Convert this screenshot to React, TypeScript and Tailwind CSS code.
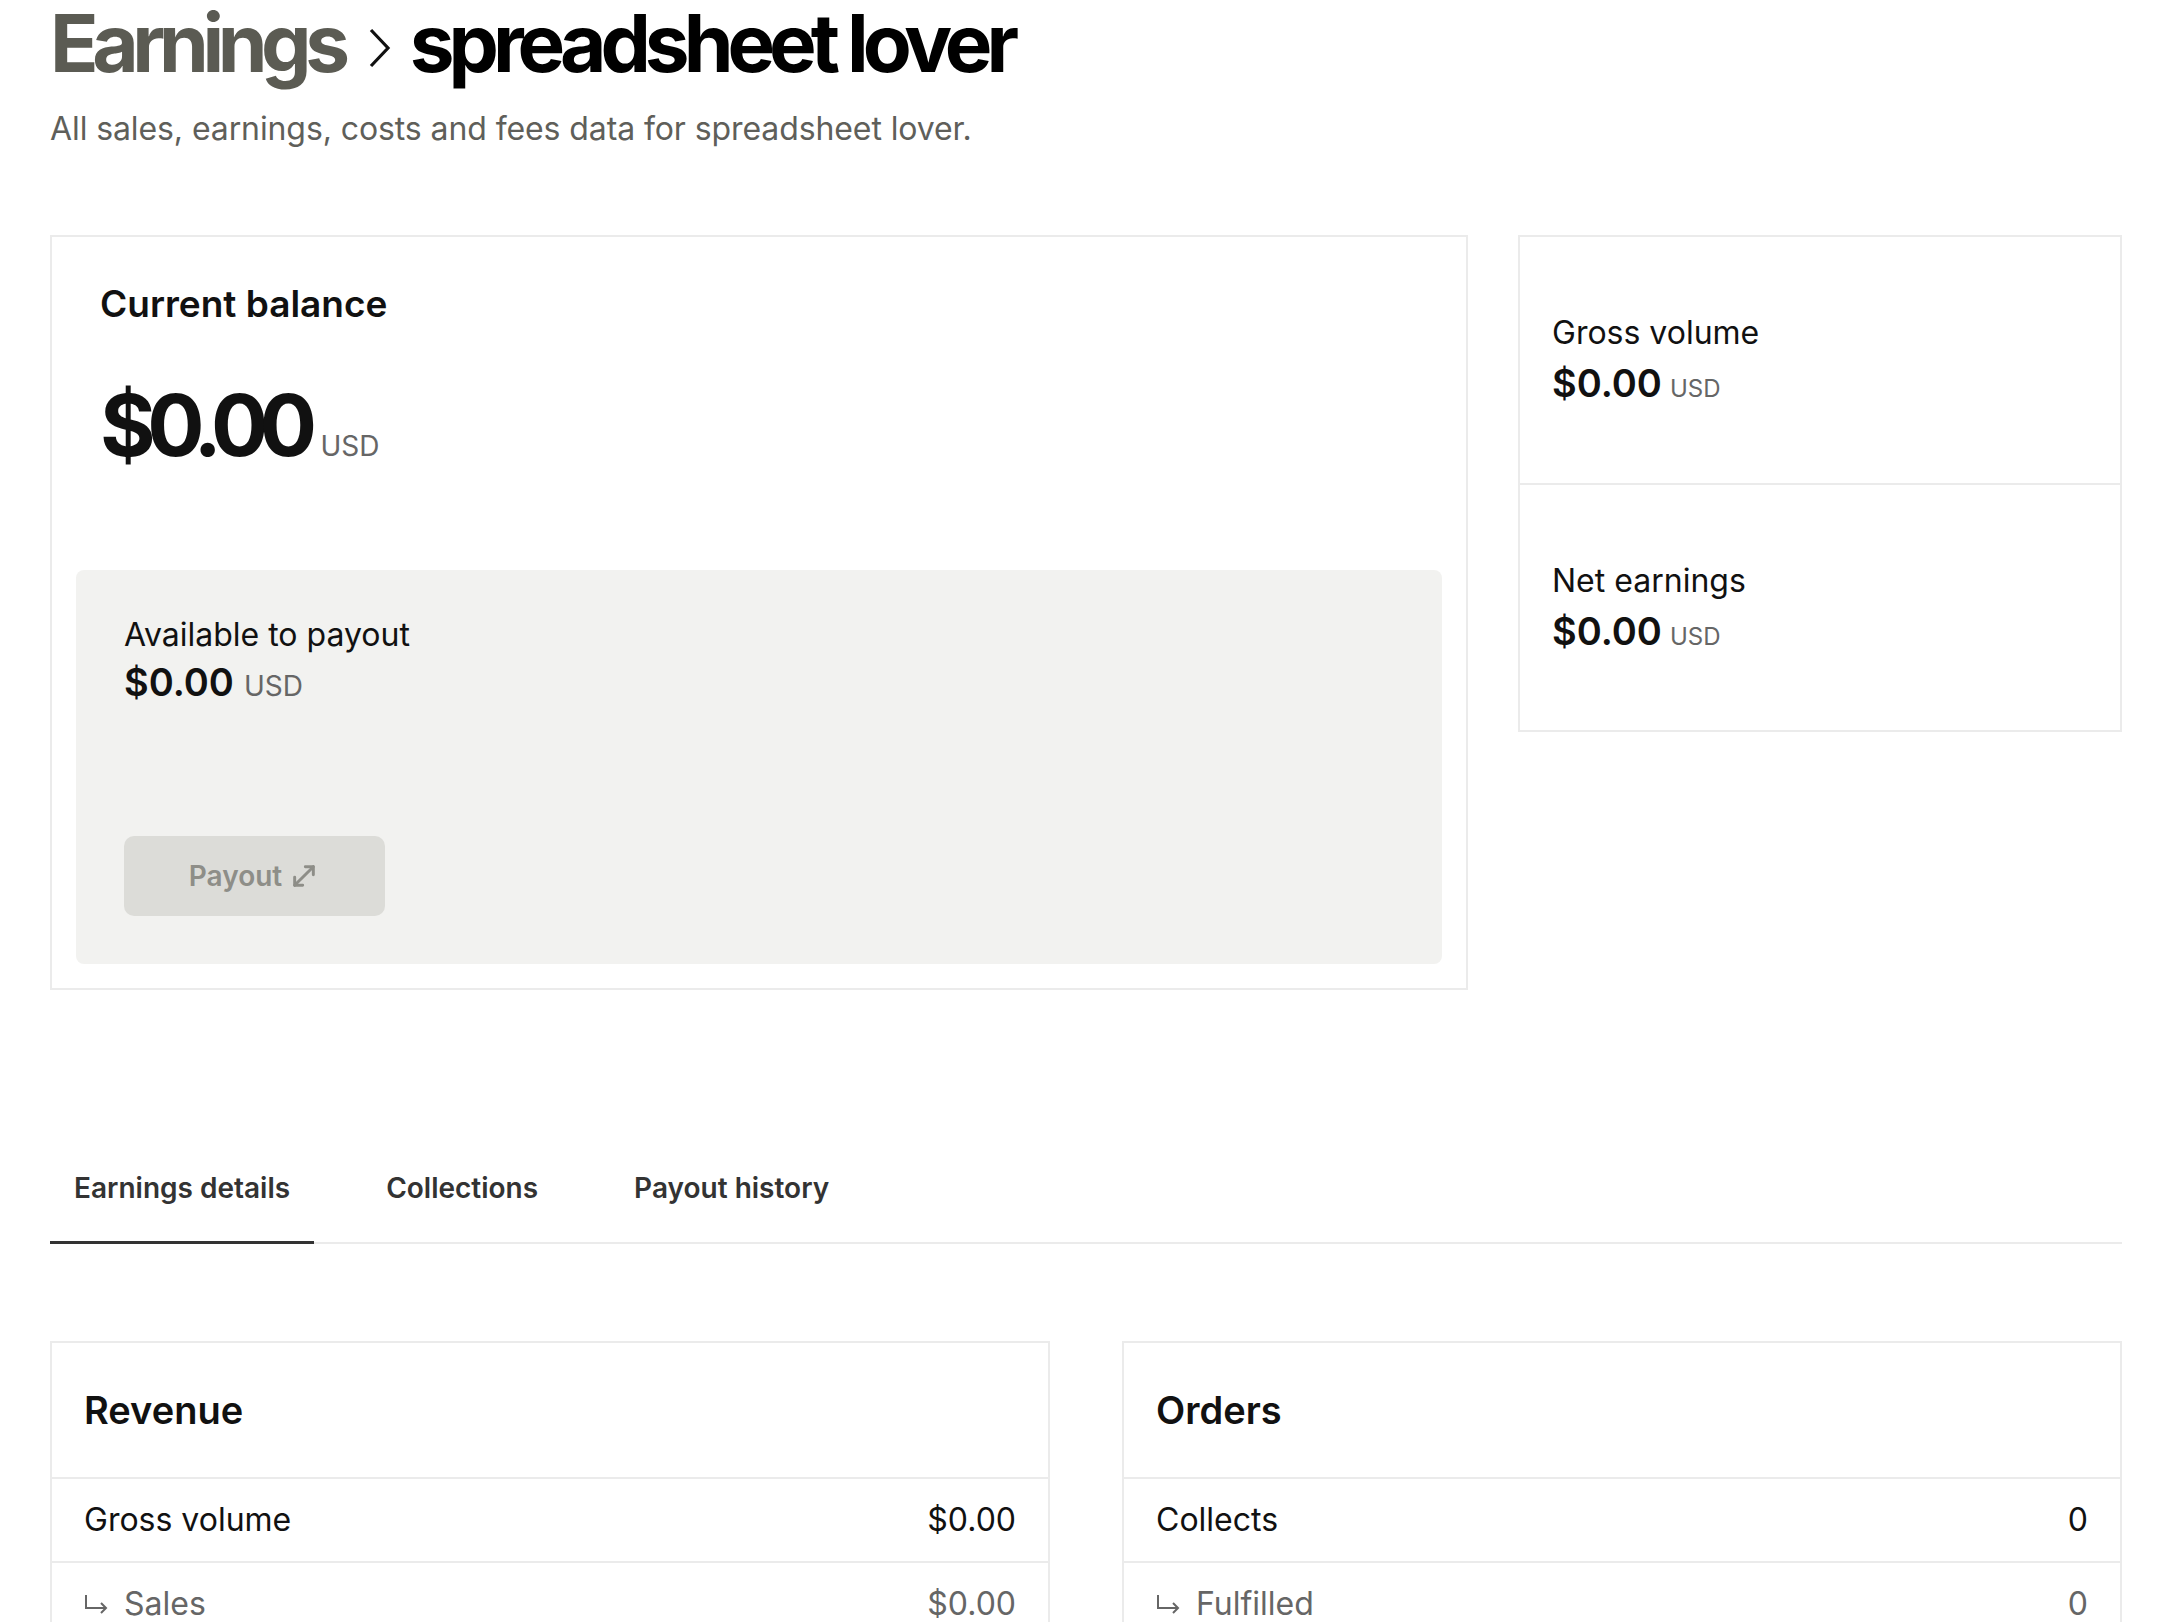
import React from 'react'
import { MoveDiagonal } from 'lucide-react'

function SubArrow() {
  return (
    <svg width="26" height="20" viewBox="0 0 26 20" fill="none" stroke="currentColor" strokeWidth="2" className="shrink-0">
      <path d="M2 1v13h20" />
      <path d="M17 9l5 5-5 5" />
    </svg>
  )
}

function Amount() {
  return (
    <div className="flex items-baseline gap-2">
      <span className="text-[38px] font-semibold leading-[44px]">$0.00</span>
      <span className="text-[24px] text-[#666]">USD</span>
    </div>
  )
}

function Row({ label, value, sub }: { label: string; value: string; sub?: boolean }) {
  return (
    <div className={`h-[84px] flex items-center justify-between px-8 border-b-2 border-[#ebebeb] text-[32px] ${sub ? 'text-[#666]' : 'text-[#111]'}`}>
      <div className="flex items-center gap-[14px]">
        {sub && <SubArrow />}
        <span>{label}</span>
      </div>
      <span>{value}</span>
    </div>
  )
}

function TableCard({ title, rows }: { title: string; rows: { label: string; value: string; sub?: boolean }[] }) {
  return (
    <div className="border-2 border-[#ebebeb]">
      <div className="h-[136px] flex items-center px-8 border-b-2 border-[#ebebeb]">
        <h3 className="text-[38px] font-semibold text-[#111]">{title}</h3>
      </div>
      {rows.map((r) => (
        <Row key={r.label} {...r} />
      ))}
    </div>
  )
}

export default function App() {
  const tabs = ['Earnings details', 'Collections', 'Payout history']

  return (
    <div className="min-h-screen bg-white font-['Inter',sans-serif] text-[#111] pl-[50px] pr-[46px] pt-[3px]">

      {/* ── Header ── */}
      <div className="flex items-start">
        <h1 className="text-[80px] font-bold leading-none tracking-[-0.08em] text-[#5b5b53]">Earnings</h1>
        <svg width="23" height="40" viewBox="0 0 23 40" fill="none" stroke="#111" strokeWidth="3.2" className="mt-[25px] ml-[24px] mr-[19px] shrink-0">
          <path d="M3 2l17 18L3 38" />
        </svg>
        <h1 className="text-[80px] font-bold leading-none tracking-[-0.075em] text-black">spreadsheet lover</h1>
      </div>
      <p className="mt-[26px] text-[32px] leading-[39px] tracking-[-0.003em] text-[#5f5f5a]">
        All sales, earnings, costs and fees data for spreadsheet lover.
      </p>

      {/* ── Balance cards ── */}
      <div className="mt-[87px] flex items-start gap-[50px]">
        <div className="flex-1 border-2 border-[#ebebeb] p-6">
          <div className="px-6 pt-5 pb-[102px]">
            <h2 className="text-[37px] font-semibold leading-[46px]">Current balance</h2>
            <div className="mt-14 flex items-baseline gap-3">
              <span className="text-[85px] font-bold leading-none tracking-[-0.1em]">$0.00</span>
              <span className="text-[28px] text-[#666]">USD</span>
            </div>
          </div>

          <div className="h-[394px] rounded-lg bg-[#f2f2f0] px-12 pt-[45px] pb-12 flex flex-col justify-between">
            <div>
              <div className="text-[32px] leading-[39px]">Available to payout</div>
              <div className="mt-[6px] flex items-baseline gap-2.5">
                <span className="text-[38px] font-semibold leading-[44px]">$0.00</span>
                <span className="text-[28px] text-[#666]">USD</span>
              </div>
            </div>
            <button className="w-[261px] h-[80px] rounded-[10px] bg-[#dcdcd8] text-[#8e8e88] text-[28px] font-semibold flex items-center justify-center gap-1.5">
              Payout
              <MoveDiagonal size={32} strokeWidth={2.2} />
            </button>
          </div>
        </div>

        <div className="w-[604px] border-2 border-[#ebebeb]">
          <div className="h-[248px] flex flex-col justify-center px-8 border-b-2 border-[#ebebeb]">
            <div className="text-[32px] leading-[39px]">Gross volume</div>
            <div className="mt-[9px]"><Amount /></div>
          </div>
          <div className="h-[245px] flex flex-col justify-center px-8">
            <div className="text-[32px] leading-[39px]">Net earnings</div>
            <div className="mt-[9px]"><Amount /></div>
          </div>
        </div>
      </div>

      {/* ── Tabs ── */}
      <div className="mt-[145px] flex items-end gap-12 border-b-2 border-[#ebebeb]">
        {tabs.map((t, i) => (
          <div
            key={t}
            className={`px-6 pt-8 pb-8 -mb-[2px] border-b-[3px] text-[28px] font-semibold leading-[42px] text-[#333] ${i === 0 ? 'border-[#333]' : 'border-transparent'}`}
          >
            {t}
          </div>
        ))}
      </div>

      {/* ── Detail tables ── */}
      <div className="mt-[97px] grid grid-cols-2 gap-[72px] pb-12">
        <TableCard
          title="Revenue"
          rows={[
            { label: 'Gross volume', value: '$0.00' },
            { label: 'Sales', value: '$0.00', sub: true },
          ]}
        />
        <TableCard
          title="Orders"
          rows={[
            { label: 'Collects', value: '0' },
            { label: 'Fulfilled', value: '0', sub: true },
          ]}
        />
      </div>

    </div>
  )
}
